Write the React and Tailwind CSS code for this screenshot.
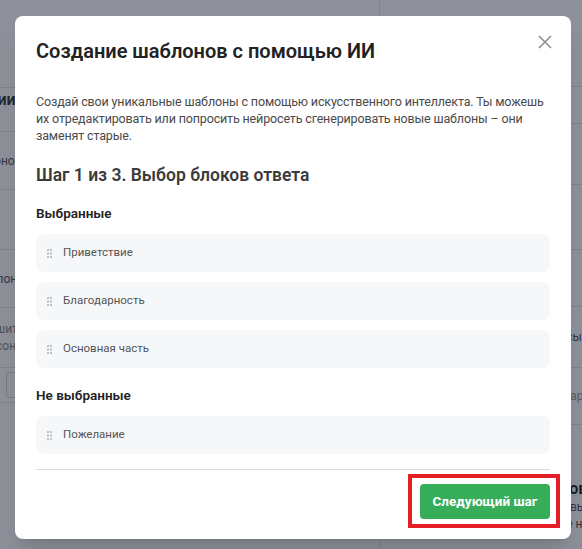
import React from 'react';

const selected = ['Приветствие', 'Благодарность', 'Основная часть'];
const notSelected = ['Пожелание'];

const DragDots = () => (
  <svg width="5" height="9" viewBox="0 0 5 9" className="shrink-0 text-[#a7aaae]" fill="currentColor">
    <circle cx="1" cy="1" r="0.95" />
    <circle cx="4" cy="1" r="0.95" />
    <circle cx="1" cy="4.5" r="0.95" />
    <circle cx="4" cy="4.5" r="0.95" />
    <circle cx="1" cy="8" r="0.95" />
    <circle cx="4" cy="8" r="0.95" />
  </svg>
);

const CloseIcon = () => (
  <svg width="14" height="14" viewBox="0 0 14 14" fill="none" stroke="currentColor" strokeWidth="1.5">
    <path d="M1 1L13 13M13 1L1 13" />
  </svg>
);

const BlockItem = ({ label }) => (
  <div className="flex h-[38px] items-center gap-[11px] rounded-[8px] bg-[#f6f7f9] pl-[11px] text-[11.5px] text-[#555]">
    <DragDots />
    <span>{label}</span>
  </div>
);

// страница под модалкой, видна только по краям
const BackgroundPage = () => (
  <div className="flex h-full text-[#333]">
    <div className="w-[380px] shrink-0 border-r border-[#e3e4e6]">
      <div className="h-[88px] border-b border-[#e3e4e6]" />
      <div className="h-[44px] border-b border-[#e3e4e6] -ml-[62px] pt-[2px] text-[16px] font-semibold leading-[20px]">Категории</div>
      <div className="flex h-[58px] items-center border-b border-[#e3e4e6] -ml-[52px] text-[12px] text-[#555]">Благодарность</div>
      <div className="flex h-[60px] flex-col justify-center border-b border-[#e3e4e6] -ml-[36px] text-[12px] leading-[17px] text-[#555]">
        <span>Произ</span>
        <span className="-ml-[22px]">Контакт</span>
      </div>
      <div className="flex h-[58px] items-center border-b border-[#e3e4e6] -ml-[28px] text-[12px] text-[#555]">Шаблоны</div>
      <div className="flex h-[60px] flex-col justify-center border-b border-[#e3e4e6] -ml-[20px] text-[12px] leading-[17px] text-[#888]">
        <span>Пишите</span>
        <span className="-ml-[4px]">персона</span>
      </div>
      <div className="flex h-[35px] items-center border-b border-[#e3e4e6] pl-[6px]">
        <div className="h-[26px] w-[60px] rounded-[3px] border border-[#cfd1d4]" />
      </div>
    </div>
    <div className="flex-1 pl-[14px]">
      <div className="h-[87px] border-b border-[#e3e4e6]" />
      <div className="h-[37px] border-b border-[#e3e4e6]" />
      <div className="h-[61px] border-b border-[#e3e4e6]" />
      <div className="flex h-[65px] items-end border-b border-[#e3e4e6] pb-[14px] text-[12px] text-[#555] whitespace-nowrap">Отзывы от покупателей из</div>
      <div className="h-[57px] border-b border-[#e3e4e6]" />
      <div className="flex h-[61px] items-center border-b border-[#e3e4e6] text-[12px] text-[#555] whitespace-nowrap">Ответы покупателям на вопросы о товарах</div>
      <div className="flex h-[57px] items-center border-b border-[#e3e4e6] text-[12px] text-[#999] whitespace-nowrap">Дополнительные данные о товаре</div>
      <div className="pt-[54px] whitespace-nowrap">
        <div className="text-[16px] font-semibold leading-[20px] text-[#222]">Автоответы для отзывов покупателей</div>
        <div className="text-[12px] leading-[17px] text-[#555]">Настройте автоответы на отзывы и вопросы</div>
        <div className="text-[12px] leading-[17px] text-[#555]">покупателей в вашем магазине на маркетплейсе</div>
      </div>
    </div>
  </div>
);

export default function App() {
  return (
    <div className="relative h-[549px] w-[582px] overflow-hidden bg-white font-['Roboto','Noto_Sans',sans-serif]">
      <BackgroundPage />
      <div className="absolute inset-0 bg-[rgba(17,24,39,0.48)]" />

      <div className="absolute inset-0 pl-[15px] pt-[16px]">
        <div className="relative flex w-[556px] flex-col rounded-[8px] bg-white px-[21px] pt-[21px] pb-[20px] shadow-xl">
          <button className="absolute right-[19px] top-[19px] text-[#8a8a8a]">
            <CloseIcon />
          </button>

          <h2 className="text-[20px] font-semibold leading-[28px] text-[#222]">
            Создание шаблонов с помощью ИИ
          </h2>

          <p className="mt-[28px] text-[12.5px] leading-[17px] tracking-[-0.15px] text-[#4a4a4a]">
            Создай свои уникальные шаблоны с помощью искусственного интеллекта. Ты можешь их отредактировать или попросить нейросеть сгенерировать новые шаблоны – они заменят старые.
          </p>

          <h3 className="mt-[19px] text-[17.5px] font-semibold leading-[24px] text-[#3b3b3b]">
            Шаг 1 из 3. Выбор блоков ответа
          </h3>

          <div className="mt-[17px] text-[13.5px] font-semibold leading-[18px] text-[#222]">Выбранные</div>
          <div className="mt-[12px] flex flex-col gap-[10px]">
            {selected.map((item) => (
              <BlockItem key={item} label={item} />
            ))}
          </div>

          <div className="mt-[18px] text-[13.5px] font-semibold leading-[18px] text-[#222]">Не выбранные</div>
          <div className="mt-[12px] flex flex-col gap-[10px]">
            {notSelected.map((item) => (
              <BlockItem key={item} label={item} />
            ))}
          </div>

          <div className="mt-[15px] h-px bg-[#dcdcdc]" />

          <div className="mt-[14px] flex justify-end">
            <div className="relative">
              <button className="h-[35px] w-[130px] rounded-[4px] bg-[#35ad59] text-[13.5px] font-bold text-white">
                Следующий шаг
              </button>
              <div className="pointer-events-none absolute -left-[12px] -right-[10px] -top-[10px] -bottom-[9px] border-[4px] border-[#e31e24]" />
            </div>
          </div>
        </div>
      </div>
    </div>
  );
}
